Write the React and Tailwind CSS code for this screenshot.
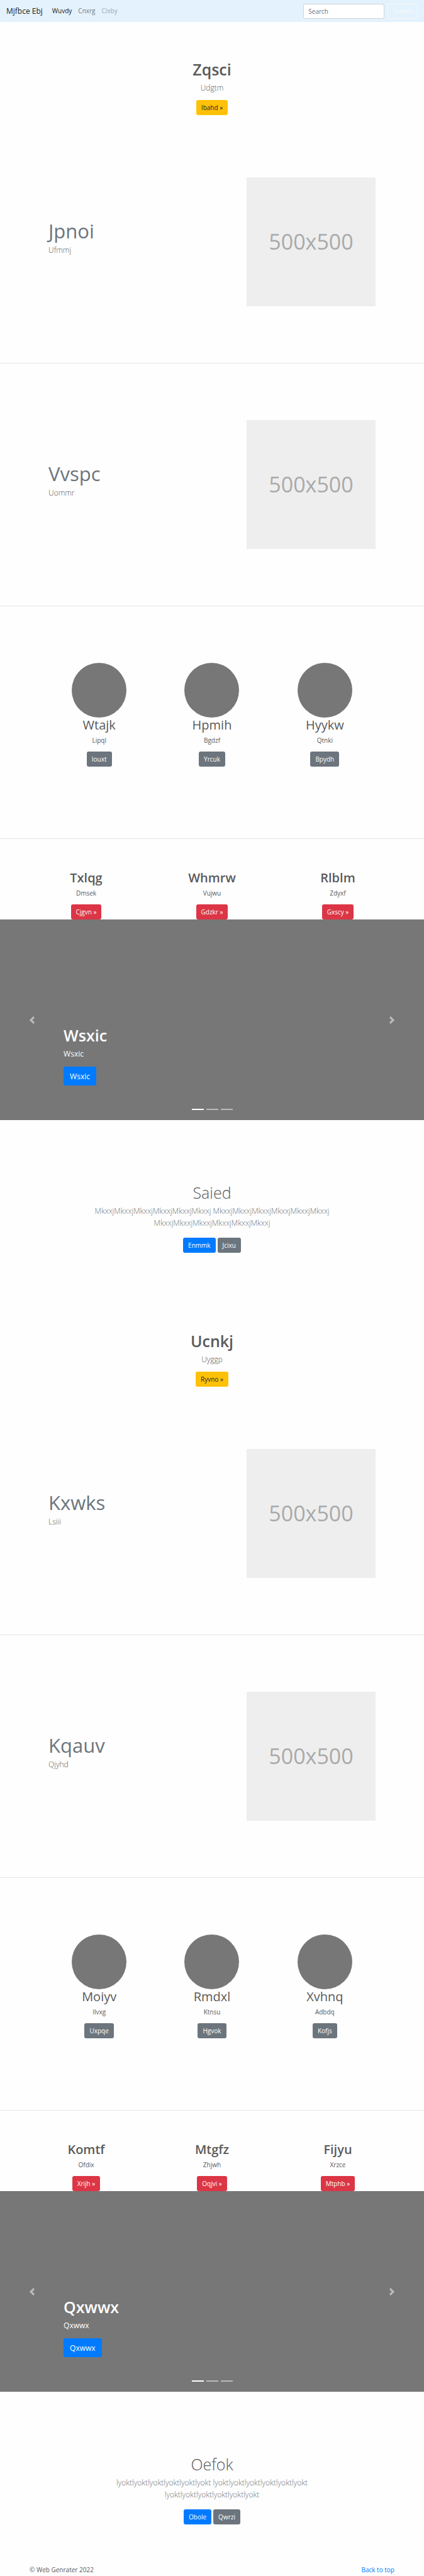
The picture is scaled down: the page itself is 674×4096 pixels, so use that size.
import React from "react";

const chapters = [
  {
    hero: { title: "Zqsci", text: "Udgtm", action: "Ibahd »" },
    features: [
      { title: "Jpnoi", text: "Ufmmj" },
      { title: "Vvspc", text: "Uommr" },
    ],
    people: [
      { title: "Wtajk", text: "Lipql", action: "Iouxt" },
      { title: "Hpmih", text: "Bgdzf", action: "Yrcuk" },
      { title: "Hyykw", text: "Qtnki", action: "Bpydh" },
    ],
    topics: [
      { title: "Txlqg", text: "Dmsek", action: "Cjgvn »" },
      { title: "Whmrw", text: "Vujwu", action: "Gdzkr »" },
      { title: "Rlblm", text: "Zdyxf", action: "Gxscy »" },
    ],
    slide: "Wsxic",
    album: {
      title: "Saied",
      text: "MkxxjMkxxjMkxxjMkxxjMkxxjMkxxj MkxxjMkxxjMkxxjMkxxjMkxxjMkxxj MkxxjMkxxjMkxxjMkxxjMkxxjMkxxj",
      primary: "Enmmk",
      secondary: "Jcixu",
    },
  },
  {
    hero: { title: "Ucnkj", text: "Uyggp", action: "Ryvno »" },
    features: [
      { title: "Kxwks", text: "Lsiii" },
      { title: "Kqauv", text: "Qjyhd" },
    ],
    people: [
      { title: "Moiyv", text: "Ilvxg", action: "Uxpqe" },
      { title: "Rmdxl", text: "Ktnsu", action: "Hgvok" },
      { title: "Xvhnq", text: "Adbdq", action: "Kofjs" },
    ],
    topics: [
      { title: "Komtf", text: "Ofdix", action: "Xrijh »" },
      { title: "Mtgfz", text: "Zhjwh", action: "Oqjvi »" },
      { title: "Fijyu", text: "Xrzce", action: "Mtphb »" },
    ],
    slide: "Qxwwx",
    album: {
      title: "Oefok",
      text: "lyoktlyoktlyoktlyoktlyoktlyokt lyoktlyoktlyoktlyoktlyoktlyokt lyoktlyoktlyoktlyoktlyoktlyokt",
      primary: "Obole",
      secondary: "Qwrzi",
    },
  },
];

const tones = {
  warning: "bg-[#ffc107] text-[#212529]",
  secondary: "bg-[#6c757d] text-white",
  danger: "bg-[#dc3545] text-white",
  primary: "bg-[#007bff] text-white",
};

function Button({ tone, children }) {
  return (
    <button type="button" className={`flex h-6 items-center rounded-[3px] px-2 text-[10px] leading-[15px] ${tones[tone]}`}>
      {children}
    </button>
  );
}

function Navbar() {
  return (
    <nav className="flex h-[35px] items-center bg-[#e3f2fd] px-[10px]">
      <a href="#" className="mr-[10px] text-[12px] leading-[19px] text-[#1c1e20]">Mjfbce Ebj</a>
      <div className="flex flex-1 text-[10px] leading-[15px]">
        <a href="#" className="px-[5px] text-[#171819]">Wuvdy</a>
        <a href="#" className="px-[5px] text-[#727a7f]">Cnxrg</a>
        <a href="#" aria-disabled="true" className="px-[5px] text-[#9fa9b1]">Clxby</a>
      </div>
      <form className="flex gap-[5px]" onSubmit={(e) => e.preventDefault()}>
        <input
          type="search"
          aria-label="Search"
          placeholder="Search"
          className="h-6 w-[129px] rounded-[3px] border border-[#ced4da] bg-white px-[7px] text-[10px] text-[#495057] placeholder:text-[#6c757d]"
        />
        <button type="submit" className="h-6 rounded-[3px] border border-[#f8f9fa] px-[7px] text-[10px] text-[#f8f9fa]">
          Search
        </button>
      </form>
    </nav>
  );
}

function Hero({ title, text, action }) {
  return (
    <section className="flex flex-col items-center">
      <h1 className="mb-[5px] text-[25px] leading-[30px] font-semibold">{title}</h1>
      <p className="mb-[10px] text-[12px] leading-[19px] font-light">{text}</p>
      <Button tone="warning">{action}</Button>
    </section>
  );
}

function Feature({ title, text }) {
  return (
    <section className="flex items-center justify-between px-[77px]">
      <div>
        <h2 className="mb-[5px] text-[31px] leading-[31px] text-[#6c757d]">{title}</h2>
        <p className="mb-[10px] text-[12px] leading-[19px] font-light">{text}</p>
      </div>
      <div className="flex size-[205px] items-center justify-center bg-[#eeeeee] text-[34px] text-[#aaaaaa]">
        500x500
      </div>
    </section>
  );
}

function Column({ title, text, action, tone, weight }) {
  return (
    <div className="flex flex-col items-center">
      <h2 className={`mb-[5px] text-[20px] leading-[24px] ${weight}`}>{title}</h2>
      <p className="mb-[10px] text-[10px] leading-[15px]">{text}</p>
      <Button tone={tone}>{action}</Button>
    </div>
  );
}

function Carousel({ text }) {
  return (
    <section className="relative h-[319px] bg-[#777777] text-white" aria-label="Slides">
      <div className="absolute bottom-[55px] left-[15%]">
        <h2 className="mb-[5px] text-[25px] leading-[30px] font-semibold">{text}</h2>
        <p className="mb-[11px] text-[12px] leading-[19px]">{text}</p>
        <button type="button" className="flex h-[30px] items-center rounded-[3px] bg-[#007bff] px-[10px] text-[12px] leading-[19px]">
          {text}
        </button>
      </div>
      <button type="button" aria-label="Previous" className="absolute inset-y-0 left-0 flex w-[15%] items-center justify-center opacity-50">
        <svg viewBox="0 0 8 8" className="size-3" fill="#fff">
          <path d="M5.25 0l-4 4 4 4 1.5-1.5L4.25 4l2.5-2.5L5.25 0z" />
        </svg>
      </button>
      <button type="button" aria-label="Next" className="absolute inset-y-0 right-0 flex w-[15%] items-center justify-center opacity-50">
        <svg viewBox="0 0 8 8" className="size-3" fill="#fff">
          <path d="M2.75 0l-1.5 1.5L3.75 4l-2.5 2.5L2.75 8l4-4-4-4z" />
        </svg>
      </button>
      <div className="absolute inset-x-0 bottom-4 flex justify-center gap-1">
        <span className="h-[2px] w-[19px] bg-white" />
        <span className="h-[2px] w-[19px] bg-white/50" />
        <span className="h-[2px] w-[19px] bg-white/50" />
      </div>
    </section>
  );
}

function Album({ title, text, primary, secondary }) {
  return (
    <section className="flex flex-col items-center text-center">
      <h2 className="mb-[5px] text-[25px] leading-[30px] font-light">{title}</h2>
      <p className="mb-[14px] w-[380px] text-[12px] leading-[19px] font-light text-[#6c757d]">{text}</p>
      <div className="flex gap-[3px]">
        <Button tone="primary">{primary}</Button>
        <Button tone="secondary">{secondary}</Button>
      </div>
    </section>
  );
}

function Divider() {
  return <hr className="my-[90px] border-[#e5e5e5]" />;
}

function Chapter({ hero, features, people, topics, slide, album }) {
  return (
    <article>
      <Hero {...hero} />
      <div className="pt-[99px]">
        {features.map((f) => (
          <React.Fragment key={f.title}>
            <Feature {...f} />
            <Divider />
          </React.Fragment>
        ))}
      </div>
      <section className="grid grid-cols-3 px-[68px]">
        {people.map((p) => (
          <div key={p.title} className="flex flex-col items-center">
            <div className="size-[87px] rounded-full bg-[#777777]" />
            <Column {...p} tone="secondary" weight="font-normal" />
          </div>
        ))}
      </section>
      <hr className="mt-[114px] mb-[50px] border-[#e5e5e5]" />
      <section className="grid grid-cols-3 px-[37px]">
        {topics.map((t) => (
          <Column key={t.title} {...t} tone="danger" weight="font-semibold" />
        ))}
      </section>
      <Carousel text={slide} />
      <div className="pt-[100px]">
        <Album {...album} />
      </div>
    </article>
  );
}

export default function App() {
  return (
    <div className="bg-[#fefefe] font-['Open_Sans','Noto_Sans',sans-serif] text-[#5a5a5a]">
      <Navbar />
      <main className="flex flex-col gap-[125px] pt-[60px]">
        {chapters.map((c) => (
          <Chapter key={c.slide} {...c} />
        ))}
      </main>
      <footer className="flex justify-between px-[47px] pt-[65px] pb-[2px] text-[10px] leading-[15px]">
        <p>© Web Genrater 2022</p>
        <a href="#" className="text-[#007bff]">Back to top</a>
      </footer>
    </div>
  );
}
